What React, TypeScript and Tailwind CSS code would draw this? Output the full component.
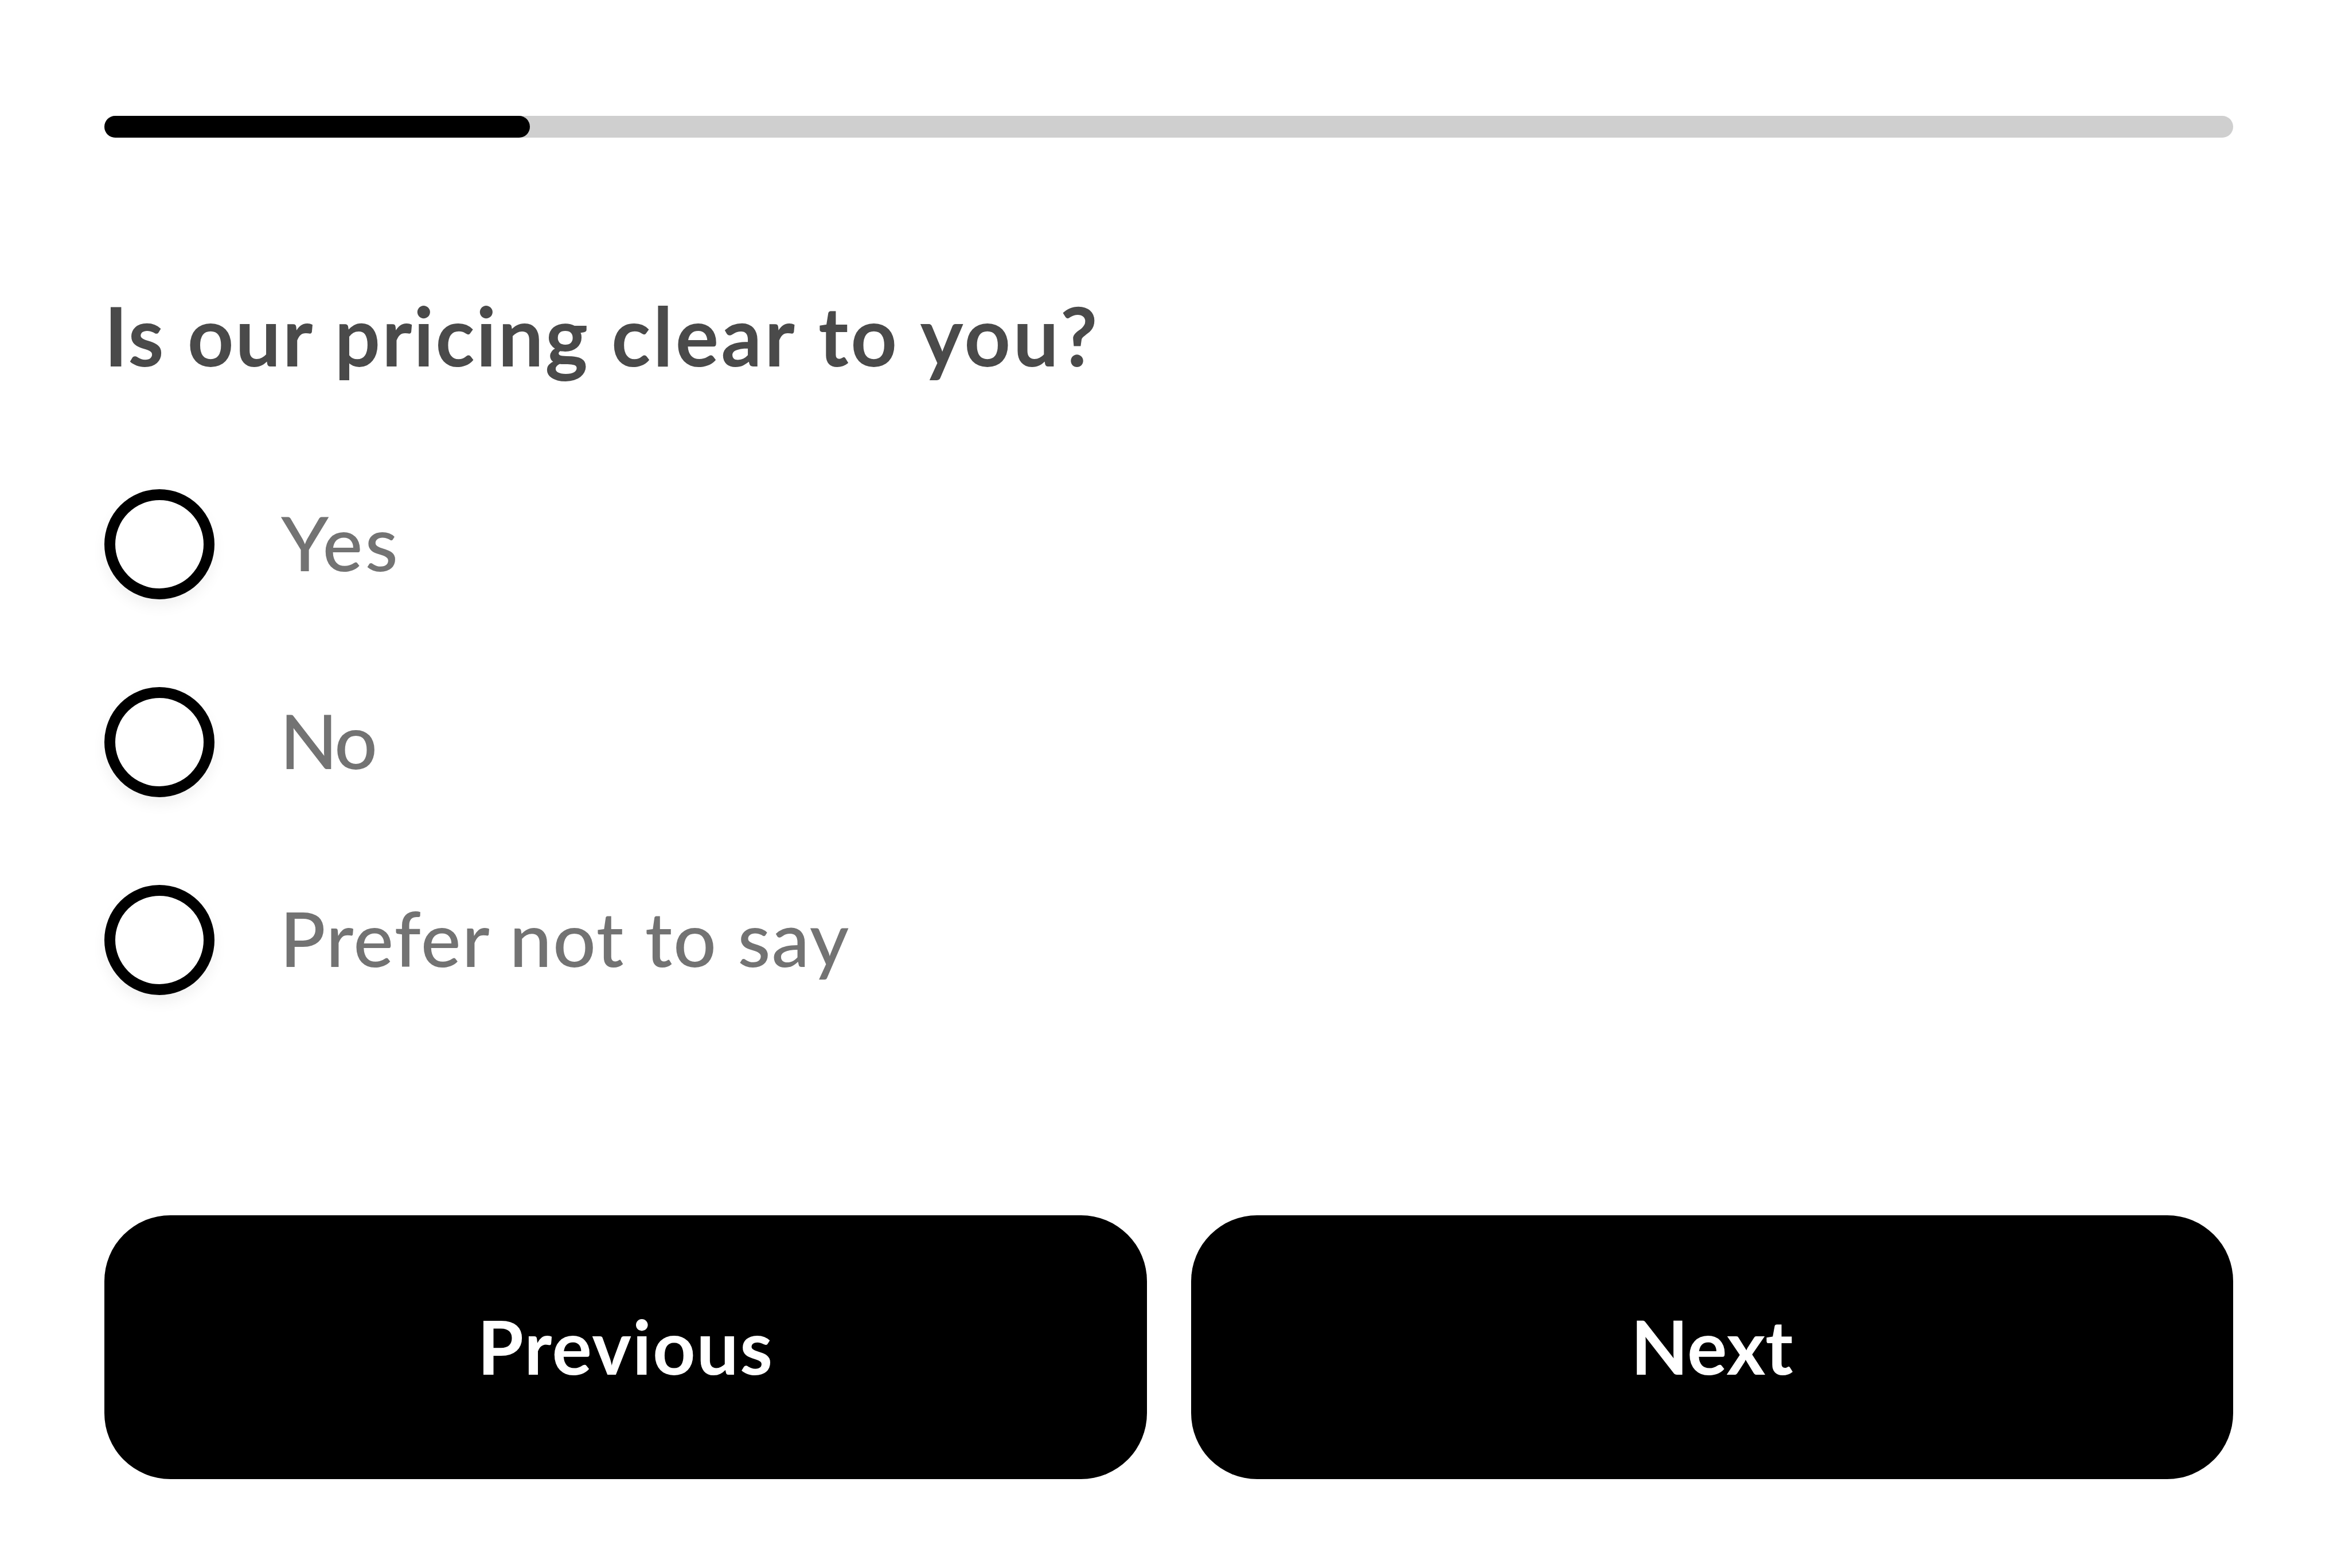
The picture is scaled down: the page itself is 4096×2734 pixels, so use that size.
export default function App() {
  const progress = 20;

  const options = [
    { label: "Yes", tracking: "ml-[2px] tracking-[4px]" },
    { label: "No", tracking: "-tracking-[4px]" },
    { label: "Prefer not to say", tracking: "tracking-[1.9px]" },
  ];

  return (
    <main className="min-h-[2734px] bg-white pt-[202px] pr-[202px] pl-[182px] font-['Lato',sans-serif]">
      {/* Progress */}
      <div className="h-[38px] rounded-full bg-[#cfcfcf]">
        <div className="h-full rounded-full bg-black" style={{ width: `${progress}%` }} />
      </div>

      {/* Question */}
      <h1 className="mt-[274px] text-[140px] leading-none font-semibold tracking-[3.6px] text-[#4a4a4a] [-webkit-text-stroke:2px_#4a4a4a]">
        Is our pricing <span className="tracking-[5.3px]">clear to you?</span>
      </h1>

      <div className="mt-[199px] flex flex-col gap-[153px]">
        {options.map((option) => (
          <label key={option.label} className="flex h-48 items-center gap-[114px]">
            <input
              type="radio"
              name="pricing"
              className="size-48 shrink-0 appearance-none rounded-full border-[19px] border-black bg-white shadow-[0_12px_24px_rgba(0,0,0,0.06)]"
            />
            <span className={`pb-2 text-[132px] leading-none font-medium text-[#737373] ${option.tracking}`}>
              {option.label}
            </span>
          </label>
        ))}
      </div>

      {/* Navigation */}
      <div className="mt-[384px] grid grid-cols-2 gap-[77px] text-[130px] leading-none font-bold text-white">
        <button className="h-[460px] rounded-[115px] bg-black pb-[5px] tracking-[2px]">
          Previous
        </button>
        <button className="h-[460px] rounded-[115px] bg-black pb-[5px]">
          Next
        </button>
      </div>
    </main>
  );
}
